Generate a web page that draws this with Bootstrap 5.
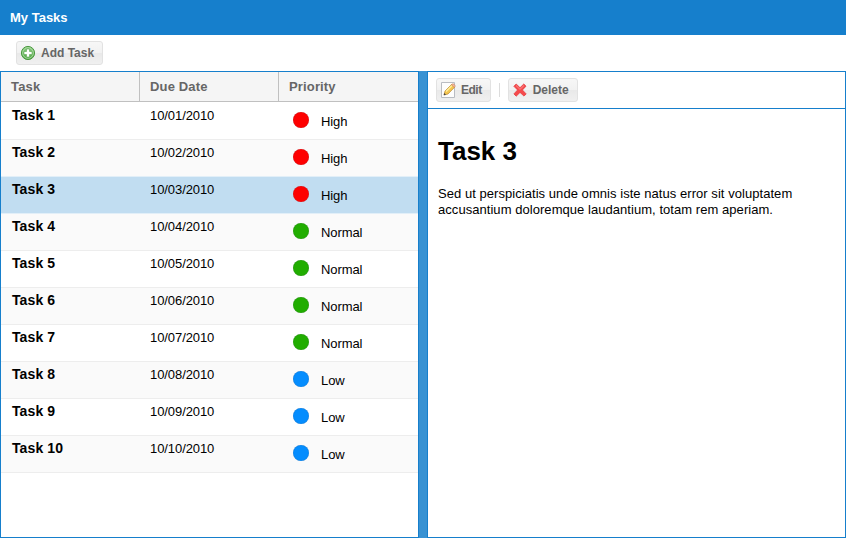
<!DOCTYPE html>
<html lang="en">
<head>
<meta charset="utf-8">
<title>My Tasks</title>
<link rel="stylesheet" href="https://cdn.jsdelivr.net/npm/bootstrap@5.3.0/dist/css/bootstrap.min.css">
<style>
body{font-family:"Liberation Sans",Arial,sans-serif;font-size:13px;line-height:16px;color:#000}
.app-title{height:35px;background:#167fcc;font-size:13px;padding-left:10px}
.app-tools{height:36px;padding-left:16px}
.tool-btn{--bs-btn-padding-x:0;--bs-btn-padding-y:0;height:24px;padding:0 8px 0 3px;border:1px solid #e2e2e2;border-radius:3px;background:linear-gradient(#f7f7f7 0,#f1f1f1 50%,#e9e9e9 52%,#f0f0f0 100%);color:#666;font-size:12px;font-weight:700;line-height:22px;gap:5px}
.tool-btn:hover{color:#444;border-color:#ccc}
.lbl-edit{letter-spacing:-.5px}
.list-pane{width:419px;border:1px solid #167fcc}
.splitter{width:8px;background:#3892d3}
.detail-pane{border:1px solid #167fcc}
.detail-tools{height:37px;border-bottom:1px solid #167fcc;padding-left:8px}
.tool-sep{width:1px;height:14px;background:#dcdcdc;margin:0 8px}
.task-grid{--bs-table-color:#000;--bs-table-bg:#fff;table-layout:fixed;width:417px;color:#000;border-collapse:separate;border-spacing:0}
.task-grid th{height:30px;padding:0 10px;background:#f5f5f5;color:#666;border-bottom:1px solid silver;border-right:1px solid silver;vertical-align:middle;letter-spacing:.15px}
.task-grid th:last-child{border-right:0}
.task-grid td{height:37px;padding:4px 10px 0 11px;border-bottom:1px solid #ededed;background:#fff;box-shadow:none}
.task-grid tbody tr:first-child td{height:38px;padding-top:5px}
.task-grid tbody tr:nth-child(even) td{background:#fafafa}
.task-grid tbody tr.chosen td{background:#c1ddf1;border-bottom-color:#e2eff8}
.task-grid tbody tr:nth-child(2) td{border-bottom-color:#e2eff8}
.task-grid td:nth-child(2){padding-left:10px;padding-top:5px;letter-spacing:-.08px}
.task-grid tbody tr:first-child td:nth-child(2){padding-top:6px}
.task-grid td:nth-child(3){padding-left:14px}
.task-grid .task-name{font-size:14px;font-weight:700;letter-spacing:.1px}
.prio{gap:12px;height:26px}
.prio span{padding-top:3px;letter-spacing:-.1px}
.dot{width:16px;height:16px;border-radius:50%;background:#fe0000;box-shadow:inset 0 0 1px rgba(80,80,100,.55)}
.dot-normal{background:#21ad00}
.dot-low{background:#058dfe}
.detail-body{padding:26px 10px}
.detail-body h1{font-size:26px;font-weight:700;line-height:32px;margin:0 0 19px}
.detail-body p{letter-spacing:.05px}
</style>
<script src="https://cdn.jsdelivr.net/npm/bootstrap@5.3.0/dist/js/bootstrap.bundle.min.js"></script>
</head>
<body class="vh-100 d-flex flex-column overflow-hidden bg-white">
<header class="app-title d-flex align-items-center text-white fw-bold flex-shrink-0">My Tasks</header>
<div class="app-tools d-flex align-items-center flex-shrink-0">
<button type="button" class="btn tool-btn d-flex align-items-center">
<svg width="16" height="16" viewBox="0 0 16 16"><defs><linearGradient id="gp" x2="0" y2="1"><stop stop-color="#8fcc83"/><stop offset="1" stop-color="#4fa544"/></linearGradient></defs><circle cx="8" cy="8" r="6.6" fill="url(#gp)" stroke="#4d9a43"/><circle cx="8" cy="8" r="5.3" fill="none" stroke="#b4dfac" stroke-width=".8"/><path d="M6.500 4h3v2.500h2.500v3H9.500v2.500h-3V9.500H4v-3h2.500z" fill="#fff" stroke="#5aa850" stroke-width=".6"/></svg>
<span>Add Task</span></button>
</div>
<main class="d-flex flex-grow-1">
<section class="list-pane flex-shrink-0">
<table class="table task-grid mb-0">
<colgroup><col style="width:139px"><col style="width:139px"><col style="width:139px"></colgroup>
<thead><tr><th>Task</th><th>Due Date</th><th>Priority</th></tr></thead>
<tbody>
<tr><td class="task-name">Task 1</td><td>10/01/2010</td><td><div class="prio d-flex align-items-center"><i class="dot"></i><span>High</span></div></td></tr>
<tr><td class="task-name">Task 2</td><td>10/02/2010</td><td><div class="prio d-flex align-items-center"><i class="dot"></i><span>High</span></div></td></tr>
<tr class="chosen"><td class="task-name">Task 3</td><td>10/03/2010</td><td><div class="prio d-flex align-items-center"><i class="dot"></i><span>High</span></div></td></tr>
<tr><td class="task-name">Task 4</td><td>10/04/2010</td><td><div class="prio d-flex align-items-center"><i class="dot dot-normal"></i><span>Normal</span></div></td></tr>
<tr><td class="task-name">Task 5</td><td>10/05/2010</td><td><div class="prio d-flex align-items-center"><i class="dot dot-normal"></i><span>Normal</span></div></td></tr>
<tr><td class="task-name">Task 6</td><td>10/06/2010</td><td><div class="prio d-flex align-items-center"><i class="dot dot-normal"></i><span>Normal</span></div></td></tr>
<tr><td class="task-name">Task 7</td><td>10/07/2010</td><td><div class="prio d-flex align-items-center"><i class="dot dot-normal"></i><span>Normal</span></div></td></tr>
<tr><td class="task-name">Task 8</td><td>10/08/2010</td><td><div class="prio d-flex align-items-center"><i class="dot dot-low"></i><span>Low</span></div></td></tr>
<tr><td class="task-name">Task 9</td><td>10/09/2010</td><td><div class="prio d-flex align-items-center"><i class="dot dot-low"></i><span>Low</span></div></td></tr>
<tr><td class="task-name">Task 10</td><td>10/10/2010</td><td><div class="prio d-flex align-items-center"><i class="dot dot-low"></i><span>Low</span></div></td></tr>
</tbody>
</table>
</section>
<div class="splitter flex-shrink-0"></div>
<section class="detail-pane flex-grow-1">
<div class="detail-tools d-flex align-items-center">
<button type="button" class="btn tool-btn d-flex align-items-center">
<svg width="16" height="16" viewBox="0 0 16 16"><path d="M1.500.5h13v15h-13z" fill="#fdfdfd" stroke="#b9bcc2"/><path d="M4 13l1-4 6.500-6.500c1-.8 3.700 1.500 3 2.800L8 12z" fill="#f4c64f" stroke="#b8852e" stroke-width=".7"/><path d="M6 9.500L12 3.500" stroke="#fff0a0" stroke-width="1.500"/><path d="M11.500 2.700l.8-.8c1-.8 3.500 1.500 2.700 2.700l-.8.900z" fill="#f3b49c" stroke="#c07a50" stroke-width=".5"/><path d="M3.700 13.300l.6-2.200 1.700 1.600z" fill="#444"/></svg>
<span class="lbl-edit">Edit</span></button>
<div class="tool-sep"></div>
<button type="button" class="btn tool-btn d-flex align-items-center">
<svg width="16" height="16" viewBox="0 0 16 16"><path d="M4.200 2L8 5.700 11.800 2 14 4.200 10.400 8l3.800 3.900-2.200 2.200L8 10.400 4.200 14.200 1.900 11.900 5.600 8 1.900 4.300z" fill="#f6494b" stroke="#e33b3e" stroke-width=".8" stroke-linejoin="round"/><path d="M4 3.500l4 3.900 4-3.900" fill="none" stroke="#ff8b8b" stroke-width="1"/></svg>
<span>Delete</span></button>
</div>
<article class="detail-body">
<h1>Task 3</h1>
<p class="mb-0">Sed ut perspiciatis unde omnis iste natus error sit voluptatem accusantium doloremque laudantium, totam rem aperiam.</p>
</article>
</section>
</main>
</body>
</html>
